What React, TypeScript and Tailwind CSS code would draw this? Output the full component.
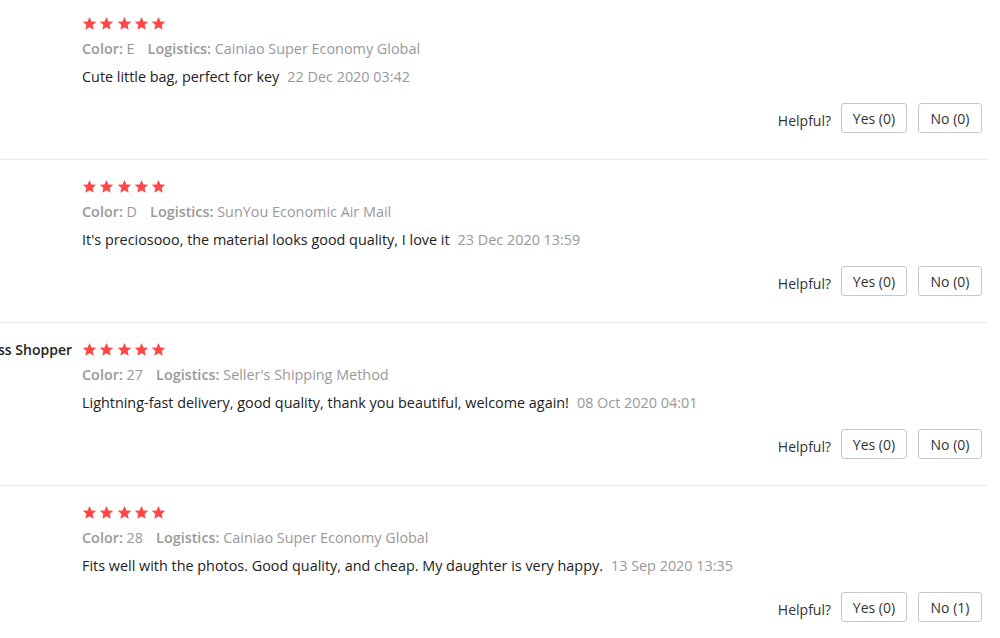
import React from "react";

type Review = {
  name?: string;
  color: string;
  logistics: string;
  text: string;
  date: string;
  yes: number;
  no: number;
};

const reviews: Review[] = [
  { color: "E", logistics: "Cainiao Super Economy Global", text: "Cute little bag, perfect for key", date: "22 Dec 2020 03:42", yes: 0, no: 0 },
  { color: "D", logistics: "SunYou Economic Air Mail", text: "It's preciosooo, the material looks good quality, I love it", date: "23 Dec 2020 13:59", yes: 0, no: 0 },
  { name: "AliExpress Shopper", color: "27", logistics: "Seller's Shipping Method", text: "Lightning-fast delivery, good quality, thank you beautiful, welcome again!", date: "08 Oct 2020 04:01", yes: 0, no: 0 },
  { color: "28", logistics: "Cainiao Super Economy Global", text: "Fits well with the photos. Good quality, and cheap. My daughter is very happy.", date: "13 Sep 2020 13:35", yes: 0, no: 1 },
];

function Star() {
  return (
    <svg width="15" height="15" viewBox="0 0 24 24" className="block">
      <polygon
        points="12,1.5 15.1,8.6 22.8,9.3 17,14.4 18.7,22 12,18 5.3,22 7,14.4 1.2,9.3 8.9,8.6"
        fill="#ff4747"
      />
    </svg>
  );
}

function ReviewBlock({ r }: { r: Review }) {
  return (
    <div className="flex h-[163px] w-[988px] border-t border-[#ebebeb]">
      <div className="w-[72px] shrink-0 overflow-hidden flex justify-end whitespace-nowrap pt-[18px]">
        {r.name && (
          <span className="text-[14px] font-semibold text-[#222] leading-[18px]">{r.name}</span>
        )}
      </div>
      <div className="flex-1 pl-[10px] pt-[19px] flex flex-col">
        <div className="flex gap-[2.3px] h-[15px]">
          <Star />
          <Star />
          <Star />
          <Star />
          <Star />
        </div>
        <div className="mt-[8px] text-[14.4px] leading-[20px] text-[#999] whitespace-nowrap">
          <span className="font-semibold text-[#999]">Color:</span> {r.color}
          <span className="inline-block w-[13px]" />
          <span className="font-semibold text-[#999]">Logistics:</span> {r.logistics}
        </div>
        <div className="mt-[8px] text-[14.4px] leading-[20px] text-[#222] whitespace-nowrap">
          {r.text}
          <span className="ml-[8px] text-[#999]">{r.date}</span>
        </div>
        <div className="mt-[16px] flex justify-end items-center pr-[6px]">
          <span className="text-[14px] text-[#333] mr-[10px] mt-[4px]">Helpful?</span>
          <button className="h-[30px] w-[66px] border border-[#c8c8c8] rounded-[3px] text-[14px] text-[#333] bg-white">
            Yes ({r.yes})
          </button>
          <button className="ml-[11px] h-[30px] w-[64px] border border-[#c8c8c8] rounded-[3px] text-[14px] text-[#333] bg-white">
            No ({r.no})
          </button>
        </div>
      </div>
    </div>
  );
}

export default function App() {
  return (
    <div
      className="w-[1000px] h-[638px] overflow-hidden bg-white"
      style={{ fontFamily: '"Open Sans", "Noto Sans", Arial, sans-serif' }}
    >
      <div className="-mt-[4px]">
        {reviews.map((r, i) => (
          <ReviewBlock key={i} r={r} />
        ))}
      </div>
    </div>
  );
}
